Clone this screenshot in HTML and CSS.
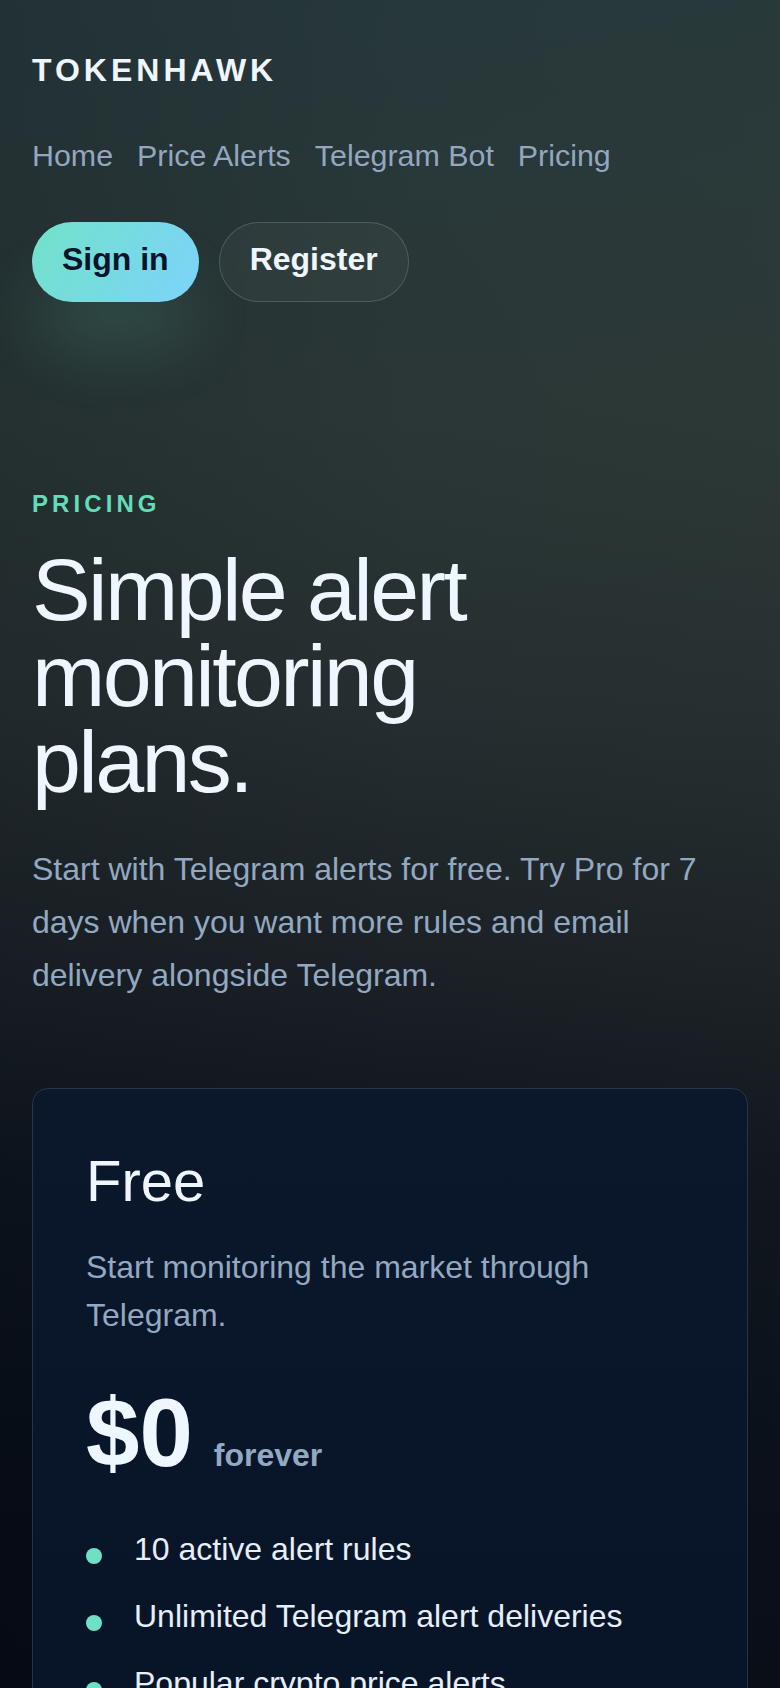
FILE: index.html
```html
<!DOCTYPE html>
<html lang="en">
<head>
<meta charset="utf-8">
<meta name="viewport" content="width=device-width, initial-scale=1">
<title>Pricing — TokenHawk</title>
<link rel="stylesheet" href="styles.css">
</head>
<body>
<div class="page">
  <header class="site-header">
    <a class="logo" href="#">TOKENHAWK</a>
    <nav class="nav">
      <a href="#">Home</a>
      <a href="#">Price Alerts</a>
      <a href="#">Telegram Bot</a>
      <a href="#">Pricing</a>
    </nav>
    <div class="auth">
      <a class="btn btn-primary" href="#">Sign in</a>
      <a class="btn btn-ghost" href="#">Register</a>
    </div>
  </header>

  <main>
    <section class="hero">
      <p class="eyebrow">PRICING</p>
      <h1 class="hero-title">Simple alert monitoring plans.</h1>
      <p class="lead">Start with Telegram alerts for free. Try Pro for 7 days when you want more rules and email delivery alongside Telegram.</p>
    </section>

    <section class="plans">
      <article class="plan">
        <h2 class="plan-name">Free</h2>
        <p class="plan-desc">Start monitoring the market through Telegram.</p>
        <div class="price">
          <span class="amount">$0</span>
          <span class="period">forever</span>
        </div>
        <ul class="features">
          <li>10 active alert rules</li>
          <li>Unlimited Telegram alert deliveries</li>
          <li>Popular crypto price alerts</li>
          <li>Percentage move alerts</li>
        </ul>
      </article>
    </section>
  </main>
</div>
</body>
</html>
```

FILE: styles.css
```css
* { box-sizing: border-box; }

body {
  margin: 0;
  font-family: "Liberation Sans", Arial, sans-serif;
  color: #eef5fd;
  background-color: #060b14;
  background-image:
    linear-gradient(90deg, rgba(0, 8, 18, 0.14) 0%, rgba(0, 0, 0, 0) 55%, rgba(70, 80, 60, 0.05) 100%),
    linear-gradient(180deg, #27383b 0%, #2b3736 24%, #252e30 42%, #1b2126 57%, #0e141c 70%, #080e18 85%, #060b15 100%);
  background-size: 100% 1688px;
  background-repeat: no-repeat;
}

.page {
  padding: 0 32px;
}

/* Header */
.site-header {
  display: flex;
  flex-direction: column;
  align-items: flex-start;
  gap: 50px;
  padding-top: 52px;
}

.logo {
  font-size: 32px;
  line-height: 36px;
  font-weight: 700;
  letter-spacing: 0.125em;
  color: #eef5fd;
  text-decoration: none;
}

.nav {
  display: flex;
  gap: 24px;
  font-size: 30.4px;
  line-height: 34px;
}

.nav a {
  color: #93a7bf;
  text-decoration: none;
}

.auth {
  display: flex;
  gap: 20px;
}

.btn {
  display: inline-block;
  font-size: 32px;
  line-height: 36px;
  font-weight: 700;
  padding: 18px 29px 24px;
  border-radius: 999px;
  border: 1px solid transparent;
  text-decoration: none;
}

.btn-primary {
  background: linear-gradient(120deg, #72e2c9 0%, #7cd3fa 100%);
  color: #07142a;
  box-shadow: 0 52px 64px -6px rgba(98, 214, 180, 0.17);
}

.btn-ghost {
  padding-left: 30px;
  padding-right: 30px;
  border-color: rgba(255, 255, 255, 0.16);
  background: rgba(255, 255, 255, 0.035);
  color: #eef5fd;
}

/* Hero */
.hero {
  padding-top: 188px;
}

.eyebrow {
  margin: 0;
  font-size: 24px;
  line-height: 28px;
  font-weight: 700;
  letter-spacing: 0.17em;
  color: #64dcb8;
}

.hero-title {
  margin: 29px 0 0;
  max-width: 520px;
  font-size: 88px;
  line-height: 86px;
  font-weight: 400;
  letter-spacing: -0.03em;
  color: #eef6ff;
}

.lead {
  margin: 38px 0 0;
  max-width: 690px;
  font-size: 32px;
  line-height: 53px;
  color: #93a8c1;
}

/* Plans */
.plans {
  margin-top: 86px;
}

.plan {
  border: 1px solid #24364f;
  border-radius: 16px;
  background: linear-gradient(180deg, #0b172a 0%, #071427 100%);
  padding: 59px 53px 60px;
}

.plan-name {
  margin: 0;
  font-size: 58px;
  line-height: 66px;
  font-weight: 400;
  color: #eef5fd;
}

.plan-desc {
  margin: 29px 0 0;
  font-size: 32px;
  line-height: 48px;
  color: #93a8c1;
}

.price {
  margin-top: 48px;
  display: flex;
  align-items: baseline;
  gap: 21px;
}

.amount {
  font-size: 96px;
  line-height: 92px;
  font-weight: 700;
  color: #eef6ff;
}

.period {
  font-size: 32px;
  font-weight: 700;
  color: #93a8c1;
}

.features {
  list-style: none;
  margin: 46px 0 0;
  padding: 0;
  display: flex;
  flex-direction: column;
  gap: 19px;
}

.features li {
  display: flex;
  gap: 32px;
  font-size: 32px;
  line-height: 48px;
  color: #e6eef8;
}

.features li::before {
  content: "";
  flex: none;
  width: 16px;
  height: 16px;
  margin-top: 23px;
  border-radius: 50%;
  background: #6fe0c4;
}
```
